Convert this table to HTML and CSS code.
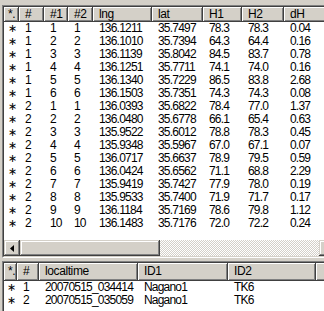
FILE: index.html
```html
<!DOCTYPE html>
<html>
<head>
<meta charset="utf-8">
<link rel="stylesheet" href="styles.css">
</head>
<body>
<div class="topstrip"></div>
<div class="frame frame-top">
  <div class="frame-inner">
    <div class="row g1 head">
      <div class="hc star-h">*.</div><div class="hc">#</div><div class="hc">#1</div><div class="hc">#2</div><div class="hc">lng</div><div class="hc">lat</div><div class="hc">H1</div><div class="hc">H2</div><div class="hc">dH</div>
    </div>
    <div class="row g1"><span class="c st">∗</span><span class="c">1</span><span class="c">1</span><span class="c">1</span><span class="c">136.1211</span><span class="c">35.7497</span><span class="c">78.3</span><span class="c">78.3</span><span class="c">0.04</span></div>
    <div class="row g1"><span class="c st">∗</span><span class="c">1</span><span class="c">2</span><span class="c">2</span><span class="c">136.1010</span><span class="c">35.7394</span><span class="c">64.3</span><span class="c">64.4</span><span class="c">0.16</span></div>
    <div class="row g1"><span class="c st">∗</span><span class="c">1</span><span class="c">3</span><span class="c">3</span><span class="c">136.1139</span><span class="c">35.8042</span><span class="c">84.5</span><span class="c">83.7</span><span class="c">0.78</span></div>
    <div class="row g1"><span class="c st">∗</span><span class="c">1</span><span class="c">4</span><span class="c">4</span><span class="c">136.1251</span><span class="c">35.7711</span><span class="c">74.1</span><span class="c">74.0</span><span class="c">0.16</span></div>
    <div class="row g1"><span class="c st">∗</span><span class="c">1</span><span class="c">5</span><span class="c">5</span><span class="c">136.1340</span><span class="c">35.7229</span><span class="c">86.5</span><span class="c">83.8</span><span class="c">2.68</span></div>
    <div class="row g1"><span class="c st">∗</span><span class="c">1</span><span class="c">6</span><span class="c">6</span><span class="c">136.1503</span><span class="c">35.7351</span><span class="c">74.3</span><span class="c">74.3</span><span class="c">0.08</span></div>
    <div class="row g1"><span class="c st">∗</span><span class="c">2</span><span class="c">1</span><span class="c">1</span><span class="c">136.0393</span><span class="c">35.6822</span><span class="c">78.4</span><span class="c">77.0</span><span class="c">1.37</span></div>
    <div class="row g1"><span class="c st">∗</span><span class="c">2</span><span class="c">2</span><span class="c">2</span><span class="c">136.0480</span><span class="c">35.6778</span><span class="c">66.1</span><span class="c">65.4</span><span class="c">0.63</span></div>
    <div class="row g1"><span class="c st">∗</span><span class="c">2</span><span class="c">3</span><span class="c">3</span><span class="c">135.9522</span><span class="c">35.6012</span><span class="c">78.8</span><span class="c">78.3</span><span class="c">0.45</span></div>
    <div class="row g1"><span class="c st">∗</span><span class="c">2</span><span class="c">4</span><span class="c">4</span><span class="c">135.9348</span><span class="c">35.5967</span><span class="c">67.0</span><span class="c">67.1</span><span class="c">0.07</span></div>
    <div class="row g1"><span class="c st">∗</span><span class="c">2</span><span class="c">5</span><span class="c">5</span><span class="c">136.0717</span><span class="c">35.6637</span><span class="c">78.9</span><span class="c">79.5</span><span class="c">0.59</span></div>
    <div class="row g1"><span class="c st">∗</span><span class="c">2</span><span class="c">6</span><span class="c">6</span><span class="c">136.0424</span><span class="c">35.6562</span><span class="c">71.1</span><span class="c">68.8</span><span class="c">2.29</span></div>
    <div class="row g1"><span class="c st">∗</span><span class="c">2</span><span class="c">7</span><span class="c">7</span><span class="c">135.9419</span><span class="c">35.7427</span><span class="c">77.9</span><span class="c">78.0</span><span class="c">0.19</span></div>
    <div class="row g1"><span class="c st">∗</span><span class="c">2</span><span class="c">8</span><span class="c">8</span><span class="c">135.9533</span><span class="c">35.7400</span><span class="c">71.9</span><span class="c">71.7</span><span class="c">0.17</span></div>
    <div class="row g1"><span class="c st">∗</span><span class="c">2</span><span class="c">9</span><span class="c">9</span><span class="c">136.1184</span><span class="c">35.7169</span><span class="c">78.6</span><span class="c">79.8</span><span class="c">1.12</span></div>
    <div class="row g1"><span class="c st">∗</span><span class="c">2</span><span class="c">10</span><span class="c">10</span><span class="c">136.1483</span><span class="c">35.7176</span><span class="c">72.0</span><span class="c">72.2</span><span class="c">0.24</span></div>
    <div class="fill"></div>
    <div class="hscroll">
      <div class="sbtn"><svg width="4" height="7" viewBox="0 0 4 7"><polygon points="4,0 4,7 0,3.5" fill="#000"/></svg></div>
      <div class="thumb"></div>
      <div class="track"></div>
      <div class="sbtn"><svg width="4" height="7" viewBox="0 0 4 7"><polygon points="0,0 0,7 4,3.5" fill="#000"/></svg></div>
    </div>
  </div>
</div>
<div class="frame frame-bottom">
  <div class="frame-inner">
    <div class="row g2 head">
      <div class="hc star-h">*.</div><div class="hc">#</div><div class="hc">localtime</div><div class="hc">ID1</div><div class="hc">ID2</div><div class="hc"></div>
    </div>
    <div class="row g2"><span class="c st">∗</span><span class="c">1</span><span class="c">20070515_034414</span><span class="c">Nagano1</span><span class="c">TK6</span><span class="c"></span></div>
    <div class="row g2"><span class="c st">∗</span><span class="c">2</span><span class="c">20070515_035059</span><span class="c">Nagano1</span><span class="c">TK6</span><span class="c"></span></div>
  </div>
</div>
</body>
</html>
```
FILE: styles.css
```css
html, body {
  margin: 0;
  padding: 0;
  width: 324px;
  height: 311px;
  overflow: hidden;
  background: #d4d0c8;
  font-family: "Liberation Sans", Arial, sans-serif;
  font-size: 12px;
  color: #000;
}

.topstrip {
  height: 5px;
}

.frame {
  margin-left: 2px;
  width: 360px;
  border: 1px solid;
  border-color: #808080 #ffffff #ffffff #808080;
  box-sizing: border-box;
}

.frame-inner {
  border: 1px solid;
  border-color: #404040 #d4d0c8 #d4d0c8 #404040;
  background: #fff;
  display: flex;
  flex-direction: column;
  height: 100%;
  box-sizing: border-box;
}

.frame-top {
  height: 253px;
}

.frame-bottom {
  margin-top: 3px;
  height: 60px;
}

.row {
  display: grid;
  height: 13px;
  line-height: 13px;
  letter-spacing: -0.8px;
}

.g1 {
  grid-template-columns: 15px 25px 24px 25px 59px 51px 39px 42px 70px;
}

.g2 {
  grid-template-columns: 13px 22px 99px 90px 88px 60px;
}

.head {
  height: 15px;
  line-height: 14px;
  letter-spacing: -0.4px;
}

.g2.head {
  height: 18px;
  line-height: 17px;
}

.hc {
  background: #d4d0c8;
  box-shadow: inset 1px 1px 0 #fff, inset -1px -1px 0 #808080;
  border-right: 1px solid #404040;
  border-bottom: 1px solid #404040;
  box-sizing: border-box;
  padding-left: 6px;
  white-space: nowrap;
  overflow: hidden;
}

.hc.star-h {
  padding-left: 4px;
}

.c {
  padding-left: 6px;
  white-space: nowrap;
  overflow: hidden;
}

.c.st {
  padding-left: 4px;
  font-family: "DejaVu Sans", sans-serif;
  font-size: 11px;
  line-height: 13px;
  letter-spacing: 0;
}

.g2 .c.st {
  padding-left: 3px;
}

.fill {
  flex: 1;
}

.hscroll {
  height: 16px;
  display: flex;
}

.sbtn {
  width: 16px;
  height: 16px;
  flex: none;
  background: #d4d0c8;
  box-shadow: inset -1px -1px 0 #404040, inset 1px 1px 0 #d4d0c8, inset -2px -2px 0 #808080, inset 2px 2px 0 #fff;
  display: flex;
  align-items: center;
  justify-content: center;
}

.thumb {
  width: 140px;
  flex: none;
  background: #d4d0c8;
  box-shadow: inset -1px -1px 0 #404040, inset 1px 1px 0 #d4d0c8, inset -2px -2px 0 #808080, inset 2px 2px 0 #fff;
}

.track {
  width: 159px;
  flex: none;
  background: repeating-conic-gradient(#d4d0c8 0 25%, #ffffff 0 50%) 0 0 / 2px 2px;
}
```
